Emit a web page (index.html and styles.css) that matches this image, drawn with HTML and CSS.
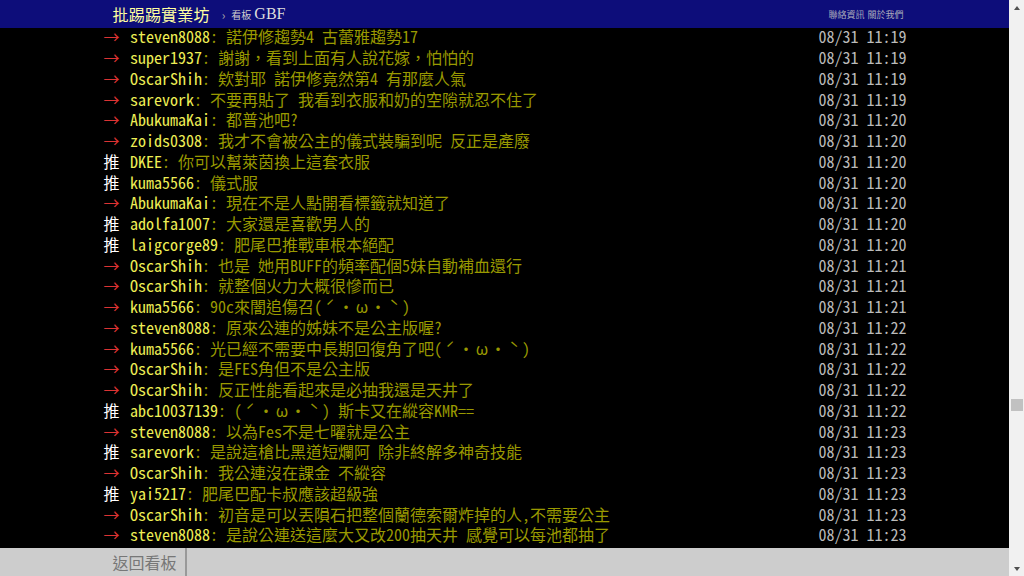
FILE: index.html
```html
<!DOCTYPE html>
<html lang="zh-Hant">
<head>
    <meta charset="UTF-8">
    <meta name="viewport" content="width=device-width, initial-scale=1.0">
    <title>GBF - 批踢踢實業坊</title>
    <link rel="stylesheet" href="styles.css">
</head>
<body>

<div class="page">
    <div class="main">
        <!-- Top bar -->
        <div class="topbar">
            <div class="topbar-inner">
                <div class="topbar-left">
                    <a class="logo" href="#">批踢踢實業坊</a>
                    <span class="crumb-sep">›</span>
                    <span class="board-label">看板</span>
                    <a class="board-name" href="#">GBF</a>
                </div>
                <div class="topbar-right">
                    <a href="#">聯絡資訊</a>
                    <a href="#">關於我們</a>
                </div>
            </div>
        </div>

        <!-- Push comments -->
        <div class="content">
            <div class="push-list" id="push-list"></div>
        </div>

        <!-- Bottom bar -->
        <div class="bottombar">
            <div class="bottombar-inner">
                <a class="back-btn" href="#">返回看板</a>
            </div>
        </div>
    </div>

    <div class="scrollbar">
        <div class="sb-btn"><span class="sb-up"></span></div>
        <div class="sb-track"><div class="sb-thumb"></div></div>
        <div class="sb-btn"><span class="sb-down"></span></div>
    </div>
</div>

<script>
// kaomoji chars are full width on the original terminal font
const face = '(<span class="fw">ˊ</span>・<span class="fw">ω</span>・<span class="fw">ˋ</span>)';

const pushes = [
    ['→', 'steven8088', '諾伊修趨勢4 古蕾雅趨勢17', '11:19'],
    ['→', 'super1937', '謝謝，看到上面有人說花嫁，怕怕的', '11:19'],
    ['→', 'OscarShih', '欸對耶 諾伊修竟然第4 有那麼人氣', '11:19'],
    ['→', 'sarevork', '不要再貼了 我看到衣服和奶的空隙就忍不住了', '11:19'],
    ['→', 'AbukumaKai', '都普池吧?', '11:20'],
    ['→', 'zoids0308', '我才不會被公主的儀式裝騙到呢 反正是產廢', '11:20'],
    ['推', 'DKEE', '你可以幫萊茵換上這套衣服', '11:20'],
    ['推', 'kuma5566', '儀式服', '11:20'],
    ['→', 'AbukumaKai', '現在不是人點開看標籤就知道了', '11:20'],
    ['推', 'adolfa1007', '大家還是喜歡男人的', '11:20'],
    ['推', 'laigcorge89', '肥尾巴推戰車根本絕配', '11:20'],
    ['→', 'OscarShih', '也是 她用BUFF的頻率配個5妹自動補血還行', '11:21'],
    ['→', 'OscarShih', '就整個火力大概很慘而已', '11:21'],
    ['→', 'kuma5566', '90c來闇追傷召' + face, '11:21'],
    ['→', 'steven8088', '原來公連的姊妹不是公主版喔?', '11:22'],
    ['→', 'kuma5566', '光已經不需要中長期回復角了吧' + face, '11:22'],
    ['→', 'OscarShih', '是FES角但不是公主版', '11:22'],
    ['→', 'OscarShih', '反正性能看起來是必抽我還是天井了', '11:22'],
    ['推', 'abc10037139', face + ' 斯卡又在縱容KMR==', '11:22'],
    ['→', 'steven8088', '以為Fes不是七曜就是公主', '11:23'],
    ['推', 'sarevork', '是說這槍比黑道短爛阿 除非終解多神奇技能', '11:23'],
    ['→', 'OscarShih', '我公連沒在課金 不縱容', '11:23'],
    ['推', 'yai5217', '肥尾巴配卡叔應該超級強', '11:23'],
    ['→', 'OscarShih', '初音是可以丟隕石把整個蘭德索爾炸掉的人,不需要公主', '11:23'],
    ['→', 'steven8088', '是說公連送這麼大又改200抽天井 感覺可以每池都抽了', '11:23']
];

const list = document.getElementById('push-list');
pushes.forEach(p => {
    const row = document.createElement('div');
    row.classList.add('push');
    const tagClass = p[0] === '推' ? 'push-tag' : 'push-tag arrow';
    row.innerHTML = `
        <span class="push-left"><span class="${tagClass}">${p[0]}</span><span class="push-userid">${p[1]}</span><span class="push-content">: ${p[2]}</span></span>
        <span class="push-ipdatetime">08/31 ${p[3]}</span>
    `;
    list.appendChild(row);
});
</script>

</body>
</html>
```

FILE: styles.css
```css
body {
    margin: 0;
    padding: 0;
    background-color: #000;
    color: #ccc;
    font-family: "Noto Sans Mono CJK TC", "Noto Sans CJK TC", monospace;
    overflow: hidden;
}

a {
    text-decoration: none;
    color: inherit;
}

.page {
    display: flex;
    height: 576px;
}

.main {
    flex: 1;
    min-width: 0;
    display: flex;
    flex-direction: column;
}

/* top bar */
.topbar {
    position: relative;
    z-index: 1;
    height: 28px;
    background-color: #0d0d7a;
}

.topbar-inner {
    width: 800px;
    height: 100%;
    margin: 0 auto;
    padding: 0 0 0 8px;
    box-sizing: border-box;
    display: flex;
    align-items: center;
    justify-content: space-between;
}

.topbar-left {
    display: flex;
    align-items: center;
}

.logo {
    font-family: "Noto Sans CJK TC", sans-serif;
    font-size: 16px;
    color: #ffffa0;
    letter-spacing: 0.2px;
}

.crumb-sep {
    font-size: 12px;
    color: #aaa;
    margin: 0 6px 0 12px;
}

.board-label {
    font-size: 10px;
    color: #ccc;
    margin-right: 3px;
}

.board-name {
    font-family: "Liberation Serif", serif;
    font-size: 16px;
    color: #ddd;
}

.topbar-right {
    display: flex;
    gap: 3px;
    font-size: 9px;
    color: #aab;
    padding-right: 1px;
}

/* push list */
.content {
    flex: 1;
    overflow: hidden;
}

.push-list {
    width: 804px;
    margin: -1.6px auto 0;
}

.push {
    display: flex;
    justify-content: space-between;
    height: 20.75px;
    line-height: 20.75px;
    font-size: 16px;
    white-space: nowrap;
}

.push-tag {
    display: inline-block;
    width: 27.5px;
    padding-left: 1px;
    box-sizing: border-box;
    color: #fff;
}

.push-tag.arrow {
    color: #d33;
}

.push-userid {
    color: #ee5;
}

.push-content {
    color: #990;
}

.push-content .fw {
    display: inline-block;
    width: 16px;
    text-align: center;
}

.push-ipdatetime {
    color: #bbb;
}

/* bottom bar */
.bottombar {
    height: 28px;
    background-color: #cdcdcd;
}

.bottombar-inner {
    width: 800px;
    height: 100%;
    margin: 0 auto;
    display: flex;
}

.back-btn {
    display: flex;
    align-items: center;
    padding: 0 8px;
    font-family: "Noto Sans CJK TC", sans-serif;
    font-size: 16px;
    color: #777;
    border-right: 2px solid #999;
}

/* fake scrollbar */
.scrollbar {
    width: 15px;
    background-color: #f1f1f1;
    display: flex;
    flex-direction: column;
}

.sb-btn {
    height: 15px;
    display: flex;
    align-items: center;
    justify-content: center;
}

.sb-up {
    border-left: 3.5px solid transparent;
    border-right: 3.5px solid transparent;
    border-bottom: 4px solid #505050;
}

.sb-down {
    border-left: 3.5px solid transparent;
    border-right: 3.5px solid transparent;
    border-top: 4px solid #505050;
}

.sb-track {
    flex: 1;
}

.sb-thumb {
    height: 12px;
    margin: 384px 1px 0 2px;
    background-color: #c1c1c1;
}
```
